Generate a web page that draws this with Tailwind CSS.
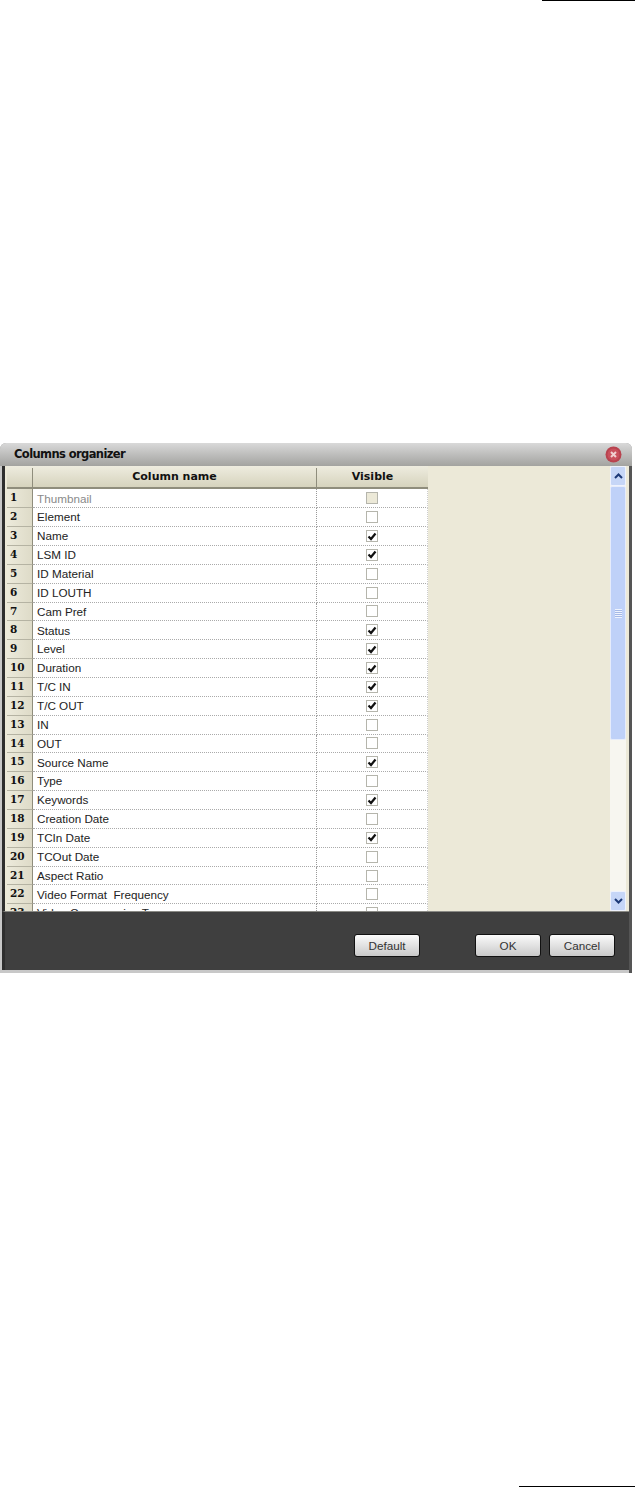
<!DOCTYPE html>
<html lang="en">
<head>
<meta charset="UTF-8">
<title>Columns organizer</title>
<script src="https://cdn.jsdelivr.net/npm/@tailwindcss/browser@4"></script>
</head>
<body class="bg-white font-['Liberation_Sans',sans-serif]">
<div class="flex flex-col h-[1487px] overflow-hidden">
  <div class="self-end w-[93px] h-px bg-black"></div>

  <!-- dialog -->
  <div class="mt-[442px] w-[632px] h-[530px] flex flex-col rounded-t-[6px] overflow-hidden bg-[#9b9b9b]">
    <div class="h-[23px] shrink-0 flex items-center justify-between pl-[14px] pr-[10px] bg-gradient-to-b from-[#d9d9d9] to-[#a3a3a0]">
      <span class="text-[11.5px] font-bold font-['DejaVu_Sans',sans-serif] text-[#111] tracking-[-0.6px]">Columns organizer</span>
      <svg width="17" height="17" viewBox="0 0 17 17">
        <circle cx="8.5" cy="8.5" r="8" fill="#b8434f"/>
        <circle cx="8.5" cy="8.5" r="6" fill="#c9505c"/>
        <path d="M6 6l5 5M11 6l-5 5" stroke="#f0d0d0" stroke-width="2"/>
      </svg>
    </div>
    <div class="flex-1 flex flex-col border-l-2 border-l-[#c8c8c8] border-r-[3px] border-r-[#555]">
      <div class="h-[445px] flex bg-[#ece9d8] border-l-[3px] border-l-[#2e2e2e] pl-[2px]">
        <div class="w-[421px] h-[445px] shrink-0 overflow-hidden">
          <div class="flex h-[23.4px] pt-[2px] bg-gradient-to-b from-[#eeecdf] to-[#d6d3bd] border-b-2 border-b-[#8f8d7c] text-[11px] font-bold font-['DejaVu_Sans',sans-serif] text-[#111]">
            <div class="w-[26px] border-r border-r-[#8f8d7c]"></div>
            <div class="w-[284px] flex items-center justify-center border-r border-r-[#8f8d7c]">Column name</div>
            <div class="w-[111px] flex items-center justify-center">Visible</div>
          </div>
          <div id="rows"></div>
        </div>
        <div class="flex-1"></div>
        <!-- scrollbar -->
        <div class="w-[16px] mr-[3px] flex flex-col bg-[#f7f6f0]">
          <div class="h-[20px] flex items-center justify-center bg-[#c6d6f7] border border-[#eef2fd] rounded-[2px]">
            <svg width="9" height="6" viewBox="0 0 9 6"><path d="M1 5l3.5-3.5L8 5" fill="none" stroke="#1d3a78" stroke-width="2"/></svg>
          </div>
          <div class="h-[254px] flex items-center justify-center bg-[#bfd1f8] border border-[#e6ecfb] rounded-[2px]">
            <div class="w-[7px] h-[9px] bg-[repeating-linear-gradient(to_bottom,#eef3fe_0,#eef3fe_1px,#a5b9e6_1px,#a5b9e6_2px)]"></div>
          </div>
          <div class="flex-1"></div>
          <div class="h-[20px] flex items-center justify-center bg-[#c6d6f7] border border-[#eef2fd] rounded-[2px]">
            <svg width="9" height="6" viewBox="0 0 9 6"><path d="M1 1l3.5 3.5L8 1" fill="none" stroke="#1d3a78" stroke-width="2"/></svg>
          </div>
        </div>
      </div>
      <div class="flex-1 flex items-start bg-[#3f3f3f] border-t border-t-[#8a8a85] border-l-[3px] border-l-[#2e2e2e] pt-[22px] pl-[349px] text-[11.7px] text-[#333]">
        <button class="w-[66px] h-[23px] rounded-[3px] border border-[#111] bg-gradient-to-b from-[#fbfbfb] to-[#c9c9c9]">Default</button>
        <button class="w-[66px] h-[23px] ml-[55px] rounded-[3px] border border-[#111] bg-gradient-to-b from-[#fbfbfb] to-[#c9c9c9]">OK</button>
        <button class="w-[66px] h-[23px] ml-[8px] rounded-[3px] border border-[#111] bg-gradient-to-b from-[#fbfbfb] to-[#c9c9c9]">Cancel</button>
      </div>
      <div class="h-[3px] shrink-0 bg-[#c8c8c8]"></div>
    </div>
  </div>

  <div class="self-end mt-auto w-[116px] h-px bg-black"></div>
</div>

<script>
const columns = [
  ["Thumbnail", 0], ["Element", 0], ["Name", 1], ["LSM ID", 1], ["ID Material", 0],
  ["ID LOUTH", 0], ["Cam Pref", 0], ["Status", 1], ["Level", 1], ["Duration", 1],
  ["T/C IN", 1], ["T/C OUT", 1], ["IN", 0], ["OUT", 0], ["Source Name", 1],
  ["Type", 0], ["Keywords", 1], ["Creation Date", 0], ["TCIn Date", 1], ["TCOut Date", 0],
  ["Aspect Ratio", 0], ["Video Format  Frequency", 0], ["Video Compression Type", 0]
];

const check = '<svg width="10" height="9" viewBox="0 0 10 9"><path d="M1.5 4.5l2.5 2.5L8.5 1.5" fill="none" stroke="#111" stroke-width="2.2"/></svg>';

document.getElementById("rows").innerHTML = columns.map(([name, visible], i) => `
  <div class="flex h-[18.86px] shrink-0">
    <div class="w-[26px] pl-[3px] flex items-center bg-gradient-to-r from-[#eceadb] to-[#dedbc8] border-b border-b-[#b5b3a3] border-r border-r-[#8f8d7c] text-[10.5px] font-bold font-['DejaVu_Serif',serif] text-[#111]">${i + 1}</div>
    <div class="w-[284px] pl-[4px] flex items-center bg-white border-b border-dotted border-b-[#aaa] border-r border-r-[#999] text-[11.7px] whitespace-pre ${i === 0 ? "text-[#8a8a8a]" : "text-[#222]"}">${name}</div>
    <div class="w-[111px] flex items-center justify-center bg-white border-b border-dotted border-b-[#aaa] border-r border-r-[#ccc]">
      <div class="w-[12px] h-[12px] flex items-center justify-center border border-[#b5b5ac] ${i === 0 ? "bg-[#ece9d8]" : "bg-white"}">${visible ? check : ""}</div>
    </div>
  </div>`).join("");
</script>
</body>
</html>
